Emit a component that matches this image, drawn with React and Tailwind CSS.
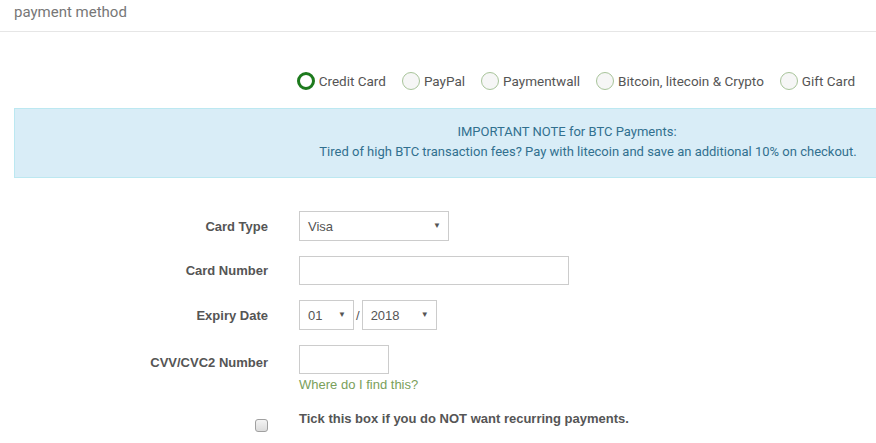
import React from "react";

const Radio = ({ checked, label }) => (
  <label className="flex items-center gap-[4px]">
    {checked ? (
      <span className="w-[18px] h-[18px] rounded-full border-[3px] border-[#1d7a1d] bg-white box-border" />
    ) : (
      <span className="w-[18px] h-[18px] rounded-full border border-[#a8c49a] bg-[#f6f6f6] box-border" />
    )}
    <span className="text-[13.5px] text-[#555]">{label}</span>
  </label>
);

const Select = ({ value, width }) => (
  <div
    className="h-[30px] border border-[#ccc] bg-white flex items-center justify-between pl-[8px] pr-[7px] text-[13px] text-[#555] box-border"
    style={{ width }}
  >
    <span>{value}</span>
    <span className="text-[8px] text-[#555]">▼</span>
  </div>
);

const Row = ({ label, children, className = "" }) => (
  <div className={"flex items-center " + className}>
    <div className="w-[268px] text-right font-bold text-[13px] text-[#555]">{label}</div>
    <div className="ml-[31px]">{children}</div>
  </div>
);

export default function App() {
  return (
    <div className="w-[876px] h-[443px] overflow-hidden bg-white" style={{ fontFamily: "Roboto, 'Liberation Sans', sans-serif" }}>
      <div className="h-[32px] border-b border-[#e6e6e6] px-[14px] pt-[1px] text-[15px] text-[#777]">
        payment method
      </div>
      <div className="flex justify-end gap-[16px] pr-[21px] pt-[39px]">
        <Radio checked label="Credit Card" />
        <Radio label="PayPal" />
        <Radio label="Paymentwall" />
        <Radio label="Bitcoin, litecoin & Crypto" />
        <Radio label="Gift Card" />
      </div>
      <div className="mt-[17px] ml-[14px] h-[70px] border border-r-0 border-[#bce8f1] bg-[#d9edf7] text-[#31708f] text-[13px] leading-[20px] pt-[13px] pl-[285px] text-center">
        <div className="pr-[42px]">IMPORTANT NOTE for BTC Payments:</div>
        <div>Tired of high BTC transaction fees? Pay with litecoin and save an additional 10% on checkout.</div>
      </div>
      <div className="mt-[33px]" style={{ fontFamily: "'Liberation Sans', Arial, sans-serif" }}>
        <Row label="Card Type">
          <Select value="Visa" width={150} />
        </Row>
        <Row label="Card Number" className="mt-[15px]">
          <div className="w-[270px] h-[29px] border border-[#ccc] bg-white" />
        </Row>
        <Row label="Expiry Date" className="mt-[15px]">
          <div className="flex items-center">
            <Select value="01" width={55} />
            <span className="mx-[2px] text-[13px] text-[#555]">/</span>
            <Select value="2018" width={75} />
          </div>
        </Row>
        <div className="flex mt-[15px]">
          <div className="w-[268px] text-right font-bold text-[13px] text-[#555] pt-[8px]">CVV/CVC2 Number</div>
          <div className="ml-[31px]">
            <div className="w-[90px] h-[29px] border border-[#ccc] bg-white" />
            <div className="mt-[1px] text-[13px] text-[#7aa05a]">Where do I find this?</div>
          </div>
        </div>
        <div className="flex mt-[14px]">
          <div className="w-[268px] flex justify-end pt-[10px]">
            <span className="w-[13px] h-[13px] rounded-[3px] border border-[#a0a0a0] bg-gradient-to-b from-[#f4f4f4] to-[#dcdcdc]" />
          </div>
          <div className="ml-[31px] font-bold text-[13px] text-[#555]">Tick this box if you do NOT want recurring payments.</div>
        </div>
      </div>
    </div>
  );
}
